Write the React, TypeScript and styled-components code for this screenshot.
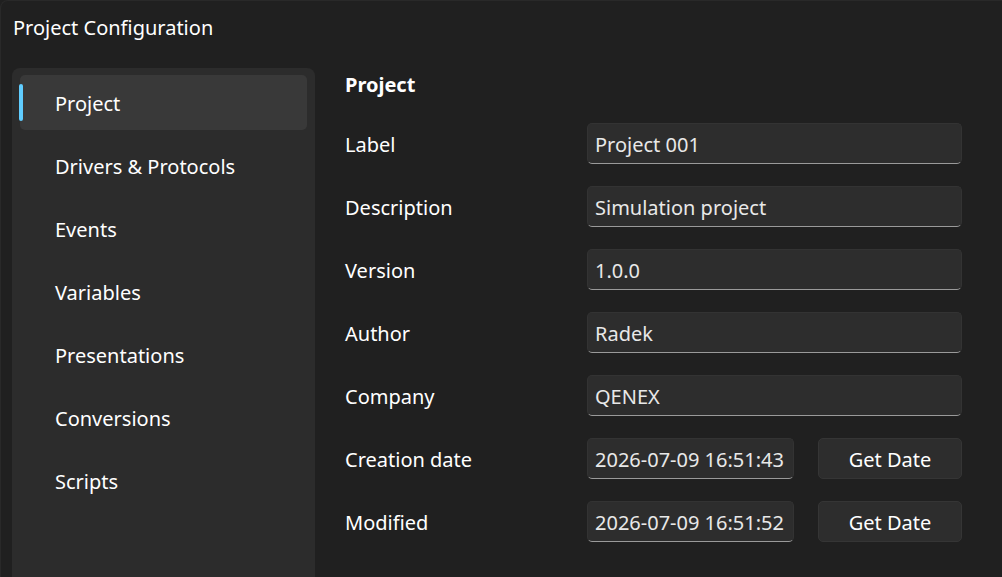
import React from "react";
import styled, { createGlobalStyle } from "styled-components";

const Global = createGlobalStyle`
  html, body { margin: 0; padding: 0; background: #202020; overflow: hidden; }
  body { font-family: "Noto Sans", "Open Sans", sans-serif; color: #ffffff; }
  * { box-sizing: border-box; }
`;

const Window = styled.div`
  width: 1002px;
  height: 577px;
  background: #202020;
  border-top-left-radius: 8px;
  border-top: 1px solid #292929;
  border-left: 1px solid #292929;
  display: flex;
  flex-direction: column;
  overflow: hidden;
`;

const Title = styled.div`
  height: 67px;
  padding: 14px 0 0 12px;
  font-size: 20px;
  line-height: 26px;
  color: #ffffff;
`;

const Body = styled.div`
  display: flex;
  flex: 1;
  min-height: 0;
`;

const Sidebar = styled.nav`
  width: 303px;
  margin-left: 11px;
  height: 560px;
  background: #2c2c2c;
  border-radius: 8px;
  padding: 7px 8px;
  display: flex;
  flex-direction: column;
  gap: 8px;
`;

const NavItem = styled.div<{ $active?: boolean }>`
  position: relative;
  height: 55px;
  border-radius: 5px;
  background: ${(p) => (p.$active ? "#393939" : "transparent")};
  padding: 2px 0 0 35px;
  display: flex;
  align-items: center;
  font-size: 20px;
  color: #ffffff;
`;

const Accent = styled.span`
  position: absolute;
  left: -1px;
  top: 9px;
  width: 4px;
  height: 37px;
  border-radius: 2px;
  background: #60cdff;
`;

const Content = styled.section`
  margin-left: 30px;
  display: flex;
  flex-direction: column;
`;

const Heading = styled.div`
  height: 32px;
  display: flex;
  align-items: center;
  padding-top: 1px;
  font-size: 20px;
  font-weight: 700;
  margin-bottom: 23px;
`;

const Rows = styled.div`
  display: flex;
  flex-direction: column;
  gap: 22px;
`;

const Row = styled.div`
  display: flex;
  align-items: center;
  height: 41px;
`;

const Label = styled.div`
  width: 242px;
  padding-top: 2px;
  font-size: 20px;
  color: #ffffff;
`;

const Field = styled.div<{ $w: number }>`
  width: ${(p) => p.$w}px;
  height: 41px;
  background: #2d2d2d;
  border: 1px solid #333333;
  border-bottom: 1px solid #9a9a9a;
  border-radius: 5px;
  padding: 2px 0 0 7px;
  display: flex;
  align-items: center;
  font-size: 20px;
  color: #e8e8e8;
  white-space: nowrap;
  overflow: hidden;
`;

const Button = styled.div`
  width: 144px;
  height: 41px;
  margin-left: 24px;
  background: #2d2d2d;
  border: 1px solid #353535;
  border-radius: 5px;
  padding-top: 2px;
  display: flex;
  align-items: center;
  justify-content: center;
  font-size: 20px;
  color: #ffffff;
`;

const navItems = [
  "Project",
  "Drivers & Protocols",
  "Events",
  "Variables",
  "Presentations",
  "Conversions",
  "Scripts",
];

const fields: { label: string; value: string; button?: boolean }[] = [
  { label: "Label", value: "Project 001" },
  { label: "Description", value: "Simulation project" },
  { label: "Version", value: "1.0.0" },
  { label: "Author", value: "Radek" },
  { label: "Company", value: "QENEX" },
  { label: "Creation date", value: "2026-07-09 16:51:43", button: true },
  { label: "Modified", value: "2026-07-09 16:51:52", button: true },
];

export default function App() {
  return (
    <>
      <Global />
      <Window>
        <Title>Project Configuration</Title>
        <Body>
          <Sidebar>
            {navItems.map((n, i) => (
              <NavItem key={n} $active={i === 0}>
                {i === 0 && <Accent />}
                {n}
              </NavItem>
            ))}
          </Sidebar>
          <Content>
            <Heading>Project</Heading>
            <Rows>
              {fields.map((f) => (
                <Row key={f.label}>
                  <Label>{f.label}</Label>
                  <Field $w={f.button ? 207 : 375}>{f.value}</Field>
                  {f.button && <Button>Get Date</Button>}
                </Row>
              ))}
            </Rows>
          </Content>
        </Body>
      </Window>
    </>
  );
}
